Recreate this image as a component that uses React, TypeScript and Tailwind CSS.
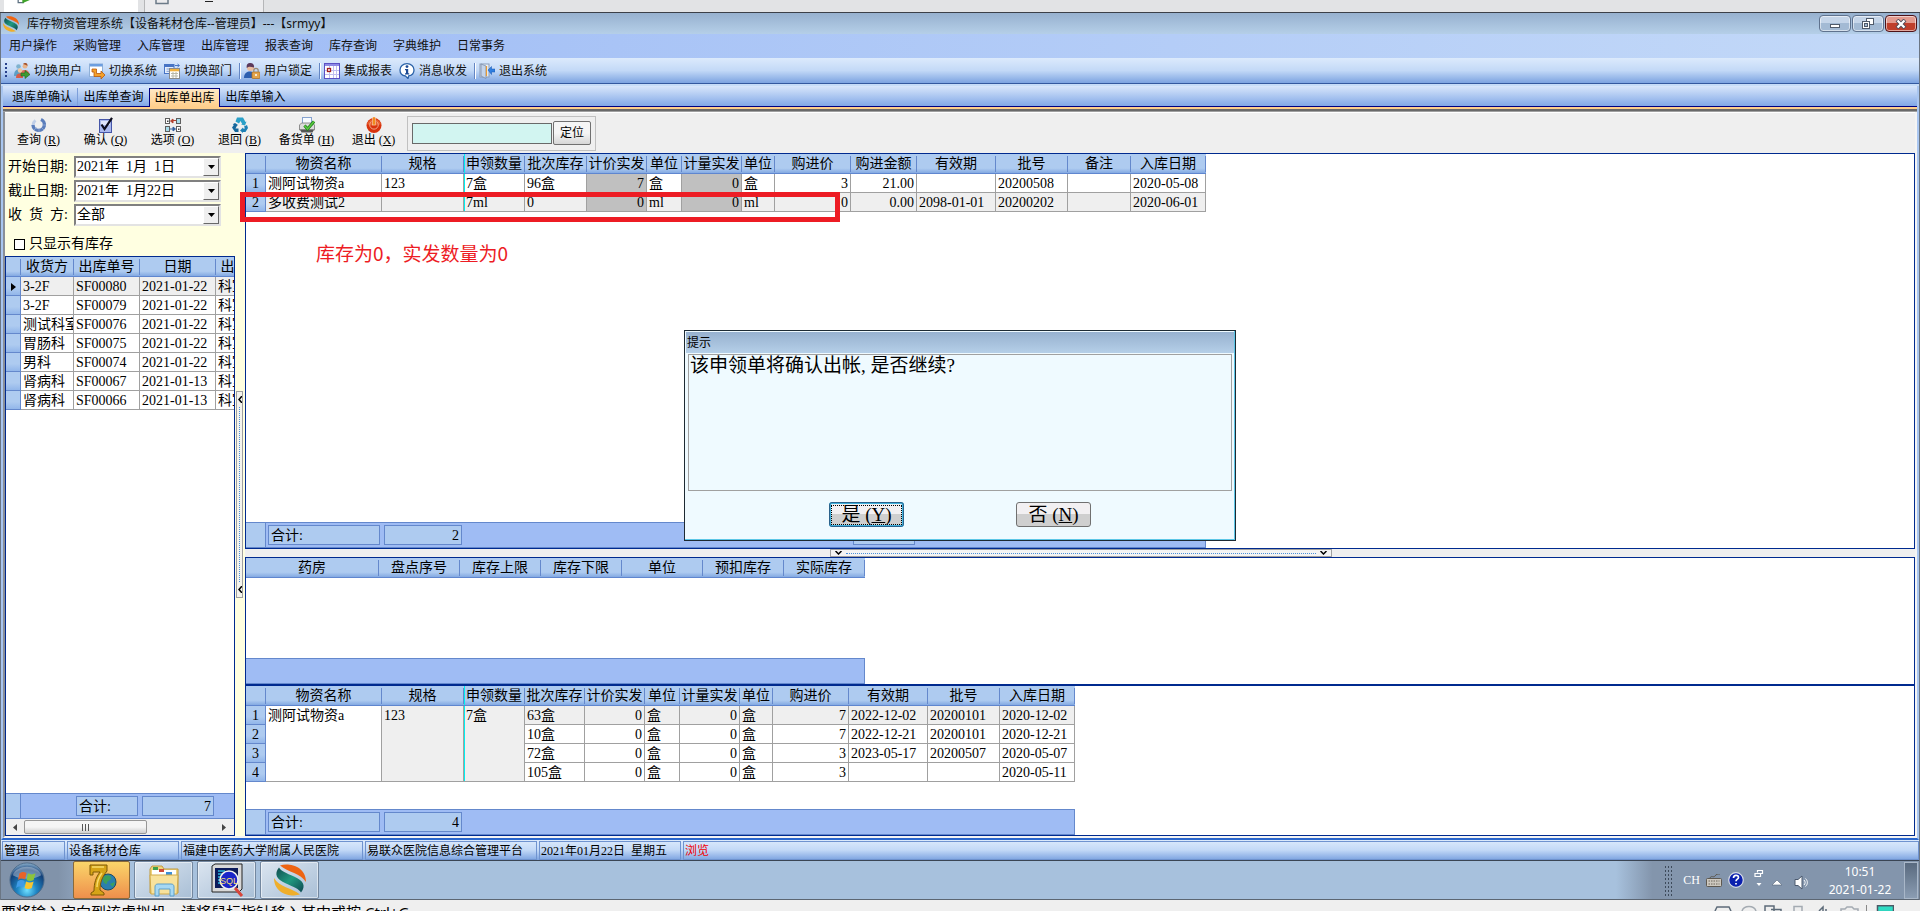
import React from "react";
import type { ReactNode } from "react";

const SONG = "font-['Liberation_Serif','Noto_Sans_CJK_SC',serif]";
const YAHEI = "font-['Noto_Sans','Noto_Sans_CJK_SC',sans-serif]";

/* ---------- icons ---------- */

function AppLogo({ className }: { className: string }) {
  return (
    <svg viewBox="0 0 32 46" preserveAspectRatio="none" className={className} aria-hidden="true">
      <defs>
        <linearGradient id="teal" x1="0" y1="0" x2="1" y2="1">
          <stop offset="0" stopColor="#0f4c50" />
          <stop offset="0.5" stopColor="#1f9a80" />
          <stop offset="1" stopColor="#0d4750" />
        </linearGradient>
      </defs>
      <path d="M6 2C16-2 32 4 32 26C27 13 14 12 6 2Z" fill="#ee6412" />
      <path d="M26 44C16 48 0 42 0 20C5 33 18 34 26 44Z" fill="#efae2b" />
      <path d="M5 5C0 14 2 22 12 28C20 33 25 36 27 41C32 32 30 24 20 18C12 13 7 10 5 5Z" fill="url(#teal)" />
    </svg>
  );
}

function SwitchUserIcon() {
  return (
    <svg viewBox="0 0 16 16" className="size-4" aria-hidden="true">
      <circle cx="4.5" cy="3.5" r="2.3" fill="#7fb2cf" />
      <path d="M0 13c0-5 2-6.5 4.500-6.500S8 8 8 11l-1 2z" fill="#5f9fc6" />
      <circle cx="11" cy="3.200" r="2.400" fill="#e8b48c" />
      <path d="M9 1c2-2 5-1 4.500 2L12 2z" fill="#a4502a" />
      <path d="M6 13c0-5 2-6 5-6s4.500 2 4.500 5z" fill="#e0705a" />
      <circle cx="6" cy="7.500" r="2.200" fill="#f0c7a0" />
      <path d="M2 15c0-3 1-4.500 4-4.500S9 12 9 15z" fill="#d85b48" />
      <path d="M7 10h4V7.500l5 4-5 4V13H7z" fill="#3f9a32" stroke="#1d6a1c" strokeWidth=".6" />
    </svg>
  );
}

function SwitchSystemIcon() {
  return (
    <svg viewBox="0 0 16 16" className="size-4" aria-hidden="true">
      <rect x=".5" y="1" width="13" height="12.500" fill="#fff" stroke="#8fb0d8" />
      <rect x="1" y="1" width="12.500" height="2.500" fill="#6c9ee0" />
      <path d="M3 6h4.500v4.500H12V8l4 4-4 4v-2.500H5V9H3z" fill="#f4a12a" stroke="#b9580c" strokeWidth=".8" />
    </svg>
  );
}

function SwitchDeptIcon() {
  return (
    <svg viewBox="0 0 16 16" className="size-4" aria-hidden="true">
      <rect x=".5" y="1.500" width="9.500" height="9" fill="#e6effc" stroke="#4774c4" />
      <rect x="1" y="2" width="9" height="2" fill="#4774c4" />
      <path d="M2.500 6h3M2.500 8.300h3" stroke="#7d9cd3" />
      <rect x="5.500" y="5.500" width="10" height="10" fill="#fff" stroke="#8a8a8a" />
      <rect x="6" y="6" width="9" height="2.300" fill="#f1b23e" />
      <path d="M7 10.500h7M7 13h7M9 9v6M12 9v6" stroke="#b8b8a8" />
      <path d="M11 2.500h4M13.500 1l2 1.500-2 1.500" fill="none" stroke="#4774c4" />
    </svg>
  );
}

function UserLockIcon() {
  return (
    <svg viewBox="0 0 16 16" className="size-4" aria-hidden="true">
      <path d="M0 15c0-5 3-6.500 6-6.500s6 2 6 6.500z" fill="#2d5fb0" />
      <circle cx="6.500" cy="4.500" r="3.600" fill="#e9bda0" />
      <path d="M2.800 5C2 1.500 4-.2 6.500 0S10.500 2 10 4.500C7 4 5 3 2.800 5z" fill="#5b3a5c" />
      <rect x="8" y="9" width="8" height="6.500" rx=".8" fill="#e2a44c" stroke="#a96a1e" strokeWidth=".7" />
      <path d="M9.800 9V7.500a2.200 2.200 0 0 1 4.400 0V9" fill="none" stroke="#9a8a72" strokeWidth="1.200" />
      <circle cx="12" cy="12" r="1" fill="#fff" />
    </svg>
  );
}

function ReportIcon() {
  return (
    <svg viewBox="0 0 16 16" className="size-4" aria-hidden="true">
      <rect x=".5" y=".5" width="15" height="15" fill="#fff" stroke="#5a50c4" />
      <rect x="1" y="1" width="14" height="2" fill="#8e8ae6" />
      <path d="M1 7.500h14M1 11.500h14M5.500 3v12M9.500 3v12M12.500 3v12" stroke="#c0bff0" />
      <rect x="3.500" y="5.500" width="3" height="3" fill="#fff" stroke="#a11d1d" strokeWidth="1.300" />
    </svg>
  );
}

function InfoIcon() {
  return (
    <svg viewBox="0 0 16 16" className="size-4" aria-hidden="true">
      <path d="M8 .7c4 0 7 2.600 7 6.200 0 3.200-2.400 5.400-5.300 6L9 15.500 6.500 13C3.300 12.500 1 10 1 6.900 1 3.300 4 .7 8 .7z" fill="#fff" stroke="#2b62a8" strokeWidth="1.300" />
      <circle cx="8" cy="3.600" r="1.400" fill="#1d4a94" />
      <path d="M6 6h3.200v4.300h1V11.500H6v-1.200h1V7.200H6z" fill="#1d4a94" />
    </svg>
  );
}

function ExitIcon() {
  return (
    <svg viewBox="0 0 16 16" className="size-4" aria-hidden="true">
      <rect x="1" y="1" width="9" height="13" fill="#e8f0fb" stroke="#8a9cb8" />
      <path d="M2 1l5 2v12.500L2 13z" fill="#c3d3ea" stroke="#7c8ea9" strokeWidth=".8" />
      <path d="M7.500 3v10" stroke="#e59b34" strokeWidth="1.200" />
      <path d="M9 7l3.500-3.500V6H16v3h-3.500v2.500z" fill="#2f7fe0" stroke="#1657b0" strokeWidth=".5" />
    </svg>
  );
}

function QueryIcon() {
  return (
    <svg viewBox="0 0 16 16" className="size-4" aria-hidden="true">
      <path d="M10 2.500a5.700 5.700 0 1 1-8 5.500" fill="none" stroke="#5a7dbb" strokeWidth="3.400" />
      <path d="M2.200 8a5.800 5.800 0 0 1 2.300-4.600" fill="none" stroke="#c0cfe8" strokeWidth="3" />
      <path d="M3 13l3-3M8 15v-4M13 13l-3-3M15 8h-4" stroke="#a9bcdf" strokeWidth=".6" />
    </svg>
  );
}

function ConfirmIcon() {
  return (
    <svg viewBox="0 0 16 16" className="size-4" aria-hidden="true">
      <rect x="1.500" y="2.500" width="12" height="13" fill="#a9b8ee" stroke="#4656a8" />
      <rect x="3" y="4" width="9" height="4" fill="#dfe5fb" />
      <path d="M3.500 7.500L6.500 12 14 .8" fill="none" stroke="#0c0c1c" strokeWidth="2.200" />
    </svg>
  );
}

function OptionsIcon() {
  return (
    <svg viewBox="0 0 18 16" className="h-4 w-[18px]" aria-hidden="true">
      <g fill="#fff" stroke="#5f5f5f">
        <rect x="1.500" y="1.500" width="4" height="5" />
        <rect x="12.500" y="1.500" width="4" height="5" fill="#a8dcea" />
        <rect x="1.500" y="9.500" width="4" height="5" fill="#a8dcea" />
        <rect x="12.500" y="9.500" width="4" height="5" />
      </g>
      <rect x="3" y="3.500" width="1.500" height="1.500" fill="#444" />
      <rect x="14" y="11.500" width="1.500" height="1.500" fill="#444" />
      <path d="M6.500 4l2.500-2v4zM9 3.500h3" fill="#b2402e" stroke="#b2402e" />
      <path d="M11.500 12l-2.500-2v4zM6 12h3" fill="#2f5f9e" stroke="#2f5f9e" />
    </svg>
  );
}

function ReturnIcon() {
  return (
    <svg viewBox="0 0 16 16" className="size-4" aria-hidden="true">
      <path d="M5 .5h6l2.500 4.500 1-.5-1.500 4-4-1 1.200-.6L8.500 4 7 6.500 3.500 4.500z" fill="#2aa0c8" />
      <path d="M3 6l3 2-1 .8L3.500 11.500H6.500V15H3L0 10.500 1.800 8 .8 7.200z" fill="#16679c" />
      <path d="M15 8l1 3-2.500 4H11v1l-3-2.500 3-3v1h2l-1-2z" fill="#1c80b6" />
    </svg>
  );
}

function StockListIcon() {
  return (
    <svg viewBox="0 0 16 16" className="size-4" aria-hidden="true">
      <rect x="3.500" y=".5" width="9" height="7" fill="#f7fbff" stroke="#86a2cf" />
      <path d="M.5 8l2-2h11l2 2v5h-15z" fill="#dcdcdc" stroke="#777" strokeWidth=".8" />
      <path d="M1 12.500h14l-1.500 3h-11z" fill="#555" />
      <path d="M5.500 8.500l3 3.500L15 4.500" fill="none" stroke="#1d7a1a" strokeWidth="3" />
      <path d="M5.500 8.500l3 3.500L15 4.500" fill="none" stroke="#58c93f" strokeWidth="1.600" />
    </svg>
  );
}

function PowerIcon() {
  return (
    <svg viewBox="0 0 16 16" className="size-4" aria-hidden="true">
      <circle cx="8" cy="8.500" r="7.500" fill="#d8330d" />
      <path d="M1 7a7.500 7.500 0 0 1 14 0c-4 2-10 2-14 0z" fill="#e8602f" />
      <path d="M5.300 4.500a4.300 4.300 0 1 0 5.400 0" fill="none" stroke="#f0a58a" strokeWidth="1" />
      <rect x="6.700" y="0" width="2.600" height="8" fill="#f08a1c" stroke="#fbe3cf" strokeWidth=".5" />
    </svg>
  );
}

function DownTriangle() {
  return (
    <svg viewBox="0 0 7 4" className="h-1 w-[7px]" aria-hidden="true">
      <path d="M0 0h7L3.500 4z" fill="#000" />
    </svg>
  );
}

function StartOrb() {
  return (
    <svg viewBox="0 0 38 38" className="size-9" aria-hidden="true">
      <defs>
        <radialGradient id="orb" cx=".5" cy=".8" r=".8">
          <stop offset="0" stopColor="#6fe0ff" />
          <stop offset=".35" stopColor="#1f86c4" />
          <stop offset=".75" stopColor="#123f78" />
          <stop offset="1" stopColor="#8fb3cf" />
        </radialGradient>
      </defs>
      <circle cx="19" cy="19" r="18" fill="url(#orb)" stroke="#4c6b8a" />
      <path d="M4 14C8 2 30 2 34 14c-8 5-22 5-30 0z" fill="#fff" opacity=".35" />
      <path d="M11 12c3-2 5-2 7.500-.5l-1.500 7c-2.500-1.500-5-1.500-7.500.5z" fill="#e8632a" />
      <path d="M20 12c3 1.500 5 1.500 8 0l-2 7c-2.500 1.500-5 1.500-7.500 0z" fill="#8cc43c" />
      <path d="M9 20.500c3-2 5-2 7.500-.5L15 27c-2.500-1.500-5-1.500-7.500.5z" fill="#3f9be8" />
      <path d="M18 20.500c3 1.500 5 1.500 8 0l-2 7c-2.500 1.500-5 1.500-7.500 0z" fill="#f7c530" />
    </svg>
  );
}

function SevenIcon() {
  return (
    <svg viewBox="0 0 32 34" className="h-[34px] w-8" aria-hidden="true">
      <circle cx="22" cy="19" r="8" fill="#2a7fae" stroke="#1c4d66" />
      <path d="M17 15c3-4 8-3 8 0s-4 2-4 5-5-1-4-5zM24 21l5-2-2 5z" fill="#3da05c" />
      <path d="M4 2h17v6c-5 6-7 12-7 19l4 3v2H5v-2l3-2c0-8 2-14 6-19H7v3H4z" fill="#d6a416" stroke="#7d5806" />
      <path d="M6 4h12M11 24c0-5 2-10 5-14" fill="none" stroke="#f8dc6c" strokeWidth="1.500" />
    </svg>
  );
}

function FolderIcon() {
  return (
    <svg viewBox="0 0 34 34" className="size-[34px]" aria-hidden="true">
      <path d="M3 6l2-3h10l2 3h14v24H3z" fill="#f0d47c" stroke="#c09a3e" />
      <path d="M5 7h24v6H5z" fill="#fff" />
      <path d="M6 4h5v3H6z" fill="#3fa04a" />
      <path d="M12 6h5v3h-5z" fill="#d04a3a" />
      <path d="M19 9h6v3h-6z" fill="#3c8fd8" />
      <path d="M3 12h28l-1 19H4z" fill="#f8e29c" stroke="#d1ab4c" />
      <path d="M8 33V24c0-2 1-3 3-3h13c2 0 3 1 3 3v9h-4v-7H12v7z" fill="#a6d8f3" stroke="#5c9fca" />
    </svg>
  );
}

function SqlIcon() {
  return (
    <svg viewBox="0 0 34 34" className="size-[34px]" aria-hidden="true">
      <path d="M2 3l3-2h27v25l-3 3H2z" fill="#d8d8d8" stroke="#222" />
      <rect x="5" y="5" width="23" height="20" fill="#0b1a5a" />
      <path d="M8 8h7M8 11h5M8 14h4M8 17h4M8 20h5" stroke="#28b7e0" strokeWidth="1.500" />
      <path d="M25 25l7 8" stroke="#d8453a" strokeWidth="3" />
      <circle cx="19" cy="17" r="9" fill="#1a24c8" stroke="#f0f0f0" strokeWidth="1.500" />
      <text x="19" y="20.500" textAnchor="middle" fontSize="9" fontFamily="Liberation Sans, sans-serif" fill="#f6e070">SQL</text>
    </svg>
  );
}

function DotGrip() {
  return (
    <span className="h-[31px] w-[9px] bg-[radial-gradient(circle,#3d4a5a_0.8px,transparent_1px)] bg-[length:3px_4px]" />
  );
}

/* ---------- data ---------- */

const menus = ["用户操作", "采购管理", "入库管理", "出库管理", "报表查询", "库存查询", "字典维护", "日常事务"];

const tools: { icon: ReactNode; label: string; sep?: boolean }[] = [
  { icon: <SwitchUserIcon />, label: "切换用户" },
  { icon: <SwitchSystemIcon />, label: "切换系统" },
  { icon: <SwitchDeptIcon />, label: "切换部门", sep: true },
  { icon: <UserLockIcon />, label: "用户锁定", sep: true },
  { icon: <ReportIcon />, label: "集成报表" },
  { icon: <InfoIcon />, label: "消息收发", sep: true },
  { icon: <ExitIcon />, label: "退出系统" },
];

const tabs = ["退库单确认", "出库单查询", "出库单出库", "出库单输入"];

const actions: { icon: ReactNode; label: string; key: string }[] = [
  { icon: <QueryIcon />, label: "查询", key: "R" },
  { icon: <ConfirmIcon />, label: "确认", key: "Q" },
  { icon: <OptionsIcon />, label: "选项", key: "O" },
  { icon: <ReturnIcon />, label: "退回", key: "B" },
  { icon: <StockListIcon />, label: "备货单", key: "H" },
  { icon: <PowerIcon />, label: "退出", key: "X" },
];

const orders = [
  ["3-2F", "SF00080", "2021-01-22"],
  ["3-2F", "SF00079", "2021-01-22"],
  ["测试科室", "SF00076", "2021-01-22"],
  ["胃肠科", "SF00075", "2021-01-22"],
  ["男科", "SF00074", "2021-01-22"],
  ["肾病科", "SF00067", "2021-01-13"],
  ["肾病科", "SF00066", "2021-01-13"],
];

const itemHeads = ["", "物资名称", "规格", "申领数量", "批次库存", "计价实发", "单位", "计量实发", "单位", "购进价", "购进金额", "有效期", "批号", "备注", "入库日期"];
const items = [
  ["1", "测阿试物资a", "123", "7盒", "96盒", "7", "盒", "0", "盒", "3", "21.00", "", "20200508", "", "2020-05-08"],
  ["2", "多收费测试2", "", "7ml", "0", "0", "ml", "0", "ml", "0", "0.00", "2098-01-01", "20200202", "", "2020-06-01"],
];

const batchHeads = ["", "物资名称", "规格", "申领数量", "批次库存", "计价实发", "单位", "计量实发", "单位", "购进价", "有效期", "批号", "入库日期"];
const batches = [
  ["63盒", "0", "盒", "0", "盒", "7", "2022-12-02", "20200101", "2020-12-02"],
  ["10盒", "0", "盒", "0", "盒", "7", "2022-12-21", "20200101", "2020-12-21"],
  ["72盒", "0", "盒", "0", "盒", "3", "2023-05-17", "20200507", "2020-05-07"],
  ["105盒", "0", "盒", "0", "盒", "3", "", "", "2020-05-11"],
];

const statuses: { text: string; width: string }[] = [
  { text: "管理员", width: "w-[63px]" },
  { text: "设备耗材仓库", width: "w-[112px]" },
  { text: "福建中医药大学附属人民医院", width: "w-[182px]" },
  { text: "易联众医院信息综合管理平台", width: "w-[172px]" },
  { text: "2021年01月22日\u00a0\u00a0星期五", width: "w-[142px]" },
];

/* ---------- grid parts ---------- */

function Cols({ widths }: { widths: number[] }) {
  return (
    <colgroup>
      {widths.map((w, i) => (
        <col key={i} style={{ width: w }} />
      ))}
    </colgroup>
  );
}

const HEAD_BG = "bg-linear-to-b from-[#aecbf0] from-75% to-[#83a9e2]";
const CYAN_EDGE = "shadow-[inset_1px_0_0_#00f0f0]";

function Heads({ labels, cyanAt }: { labels: string[]; cyanAt?: number }) {
  return (
    <thead>
      <tr>
        {labels.map((label, i) => (
          <th
            key={i}
            className={`h-5 overflow-hidden border-b border-[#5f86cf] px-0 pt-0.5 pb-px font-normal ${HEAD_BG} ${i === cyanAt ? CYAN_EDGE : ""}`}
          >
            <div className="h-4 overflow-hidden border-r border-[#6488cc] leading-4 whitespace-nowrap">{label}</div>
          </th>
        ))}
      </tr>
    </thead>
  );
}

const CELL = "h-[19px] overflow-hidden border-r border-b border-[#a0a0a0] px-0.5 pt-0.5 pb-0 leading-4 whitespace-nowrap";
const INDICATOR =
  "h-[19px] overflow-hidden border-r border-b border-[#6488cc] bg-linear-to-b from-[#aecbf0] from-60% to-[#92b6ea] px-0 pt-0.5 pb-0 text-center leading-4 font-normal";

const widthsA = [20, 116, 82, 61, 62, 60, 35, 60, 33, 76, 66, 79, 72, 63, 75];
const widthsB = [133, 81, 81, 81, 81, 81, 81];
const widthsC = [20, 116, 82, 61, 60, 60, 35, 60, 33, 76, 79, 72, 75];
const widthsL = [15, 53, 66, 76, 66];

function SumBox({ children, className }: { children?: ReactNode; className: string }) {
  return <span className={`border border-[#6488cc] bg-[#aecbf0] px-0.5 leading-5 ${className}`}>{children}</span>;
}

function GridFooter({ count, width, extra }: { count: string; width: string; extra?: boolean }) {
  return (
    <div className={`flex h-[26px] shrink-0 border border-l-0 border-[#6488cc] bg-[#9fbcf4] ${width}`}>
      <span className="w-5 border-r border-[#6488cc] bg-[#aecbf0]" />
      <div className="flex flex-1 gap-1 px-0.5 py-0.5">
        <SumBox className="w-[112px]">合计:</SumBox>
        <SumBox className="w-[78px] text-right">{count}</SumBox>
        {extra && <SumBox className="ml-[387px] w-[62px]" />}
      </div>
    </div>
  );
}

/* ---------- page parts ---------- */

function HostTop() {
  return (
    <div className="flex h-[13px] shrink-0 overflow-hidden border-b border-[#3c4048] bg-[#e2e3e5]">
      <div className="ml-1 flex w-[134px] bg-white pl-3">
        <svg viewBox="0 0 16 6" className="h-[5px] w-4" aria-hidden="true">
          <path d="M1 0v3h7" fill="none" stroke="#5c6f80" strokeWidth="1.500" />
          <path d="M6 0v4l9-4z" fill="#3fa32a" />
        </svg>
      </div>
      <div className="ml-1.5 flex w-[120px] gap-9 border-x border-[#b5b6b8] bg-[#ececee] pl-2.5">
        <svg viewBox="0 0 14 5" className="h-[5px] w-3.5" aria-hidden="true">
          <path d="M1 0v3.500h12V0" fill="none" stroke="#6b7a88" strokeWidth="1.500" />
        </svg>
        <span className="h-[2px] w-2 border-b border-[#222]" />
      </div>
    </div>
  );
}

function TitleBar() {
  const frame = "flex h-[17px] w-8 items-center justify-center rounded-sm border shadow-[inset_0_0_0_1px_rgba(255,255,255,0.55)]";
  return (
    <header className={`flex h-[21px] shrink-0 items-center bg-linear-to-b from-[#97b1cf] to-[#b5cfe8] pr-0.5 pl-0.5 text-xs ${YAHEI}`}>
      <AppLogo className="h-4 w-4" />
      <h1 className="ml-2 flex-1 leading-5 text-[#111]">库存物资管理系统【设备耗材仓库--管理员】---【srmyy】</h1>
      <div className="flex gap-px">
        <button type="button" aria-label="最小化" className={`${frame} border-[#5f728e] bg-linear-to-b from-[#c5d5e9] from-50% to-[#a3bad4] to-50%`}>
          <svg viewBox="0 0 10 4" className="mt-1 h-1 w-2.5"><rect x=".5" y=".5" width="9" height="3" fill="#fff" stroke="#4f5a6a" /></svg>
        </button>
        <button type="button" aria-label="还原" className={`${frame} border-[#5f728e] bg-linear-to-b from-[#c5d5e9] from-50% to-[#a3bad4] to-50%`}>
          <svg viewBox="0 0 12 11" className="h-[11px] w-3">
            <rect x="4.500" y=".5" width="7" height="6" fill="#fff" stroke="#4f5a6a" />
            <rect x=".5" y="3.500" width="7" height="7" fill="#fff" stroke="#4f5a6a" />
            <rect x="2.500" y="5.500" width="3" height="3" fill="#a3bad4" stroke="#4f5a6a" />
          </svg>
        </button>
        <button type="button" aria-label="关闭" className={`${frame} border-[#4e1218] bg-linear-to-b from-[#e39a8e] from-50% to-[#bf3f2c] to-50%`}>
          <svg viewBox="0 0 12 10" className="h-2.5 w-3">
            <path d="M2 1l8 8M10 1L2 9" stroke="#4b4a58" strokeWidth="4" />
            <path d="M2.500 1.500l7 7M9.500 1.500l-7 7" stroke="#fff" strokeWidth="2.300" />
          </svg>
        </button>
      </div>
    </header>
  );
}

function MenuBar() {
  return (
    <nav className={`flex h-6 shrink-0 items-center bg-linear-to-r from-[#9dbaf5] to-[#c3d9f8] text-xs ${YAHEI}`}>
      {menus.map((m) => (
        <button type="button" key={m} className="px-2 leading-5 text-[#111]">
          {m}
        </button>
      ))}
    </nav>
  );
}

function ToolBar() {
  return (
    <div className="shrink-0 bg-[#c6dcf7] pb-0.5">
      <div className={`flex h-[26px] items-center gap-[7px] border-b border-[#33599f] bg-linear-to-b from-[#dceafc] via-[#c3d9f7] to-[#7ca3e0] pl-1 text-xs ${YAHEI}`}>
        <span className="h-4 w-0.5 bg-[repeating-linear-gradient(to_bottom,#28408c_0px_2px,transparent_2px_4px)]" />
        {tools.map((t) => (
          <React.Fragment key={t.label}>
            <button type="button" className="flex items-center gap-1 leading-5 text-[#111]">
              {t.icon}
              {t.label}
            </button>
            {t.sep && <span className="-mr-1 h-4 w-0.5 border-l border-[#6486c4] bg-white" />}
          </React.Fragment>
        ))}
      </div>
    </div>
  );
}

function TabStrip() {
  return (
    <div className="shrink-0">
      <div role="tablist" className={`flex h-[21px] items-end border-b border-[#000080] bg-linear-to-b from-[#d9e7fb] to-[#82a8e6] pl-1 text-xs ${SONG}`}>
        {tabs.map((t, i) => (
          <button
            type="button"
            role="tab"
            aria-selected={i === 2}
            key={t}
            className={
              i === 2
                ? "-mb-px h-[19px] w-[71px] border border-b-0 border-[#000080] bg-linear-to-b from-[#ffe8c4] to-[#ffcf8c] leading-[18px]"
                : i === 0
                  ? "h-[18px] w-[71px] border-r border-[#7d9fda] leading-[18px]"
                  : "h-[18px] w-[71px] leading-[18px]"
            }
          >
            {t}
          </button>
        ))}
      </div>
      <div className="h-0.5 bg-[#ffcf8c]" />
      <div className="h-[3px] border-b border-[#a0a0a0] bg-[#696969]" />
    </div>
  );
}

function ActionBar() {
  return (
    <div className={`flex h-[41px] shrink-0 items-center border-t border-white bg-[#efefef] text-xs ${SONG}`}>
      {actions.map((a) => (
        <button type="button" key={a.label} className="flex h-[33px] w-[67px] flex-col items-center whitespace-nowrap">
          {a.icon}
          <span className="leading-[14px]">
            {a.label} (<u>{a.key}</u>)
          </span>
        </button>
      ))}
      <div className="flex h-[35px] items-center gap-px border border-[#c0c0c0] px-1">
        <input aria-label="定位内容" className="h-[21px] w-[140px] border border-[#696969] bg-[#d2f5f1] px-1 outline-none" />
        <button type="button" className="h-6 w-[38px] rounded-xs border border-[#707070] bg-linear-to-b from-[#f5f5f5] from-50% to-[#d6d6d6]">
          定位
        </button>
      </div>
    </div>
  );
}

function Combo({ id, label, value }: { id: string; label: string; value: string }) {
  return (
    <div className="flex h-[22px] items-center">
      <label htmlFor={id} className="w-[66px] whitespace-pre">
        {label}
      </label>
      <div className="relative h-[22px] w-[147px] border-2 border-t-[#808080] border-r-[#e3e3e3] border-b-[#e3e3e3] border-l-[#808080] bg-white">
        <select id={id} defaultValue={value} className="size-full appearance-none bg-transparent pl-px leading-4 outline-none">
          <option>{value}</option>
        </select>
        <span className="pointer-events-none absolute inset-y-0 right-0 flex w-4 items-center justify-center border border-t-white border-r-[#696969] border-b-[#696969] border-l-white bg-[#efefef]">
          <DownTriangle />
        </span>
      </div>
    </div>
  );
}

function OrderPanel() {
  return (
    <aside className="flex w-60 shrink-0 bg-[#ffffe1]">
      <div className="flex min-w-0 flex-1 flex-col">
        <div className="flex flex-col gap-0.5 pt-[3px] pl-[3px]">
          <Combo id="from" label="开始日期:" value={"2021年\u00a0\u00a01月\u00a0\u00a01日"} />
          <Combo id="to" label="截止日期:" value={"2021年\u00a0\u00a01月22日"} />
          <Combo id="dept" label={"收\u2002货\u2002方:"} value="全部" />
        </div>
        <label className="flex h-[30px] items-center gap-1 pt-1.5 pl-[9px]">
          <input type="checkbox" className="size-[11px] appearance-none border border-black bg-white" />
          只显示有库存
        </label>
        <div className="flex min-h-0 flex-1 flex-col overflow-hidden border border-[#002a8f] bg-white">
          <div className="min-h-0 flex-1 overflow-hidden">
            <table className="w-[276px] table-fixed border-separate border-spacing-0">
              <Cols widths={widthsL} />
              <Heads labels={["", "收货方", "出库单号", "日期", "出库类型"]} />
              <tbody>
                {orders.map((o, i) => (
                  <tr key={o[1]} className={i === 0 ? "bg-[#efefef]" : "bg-white"}>
                    <th className={INDICATOR}>
                      {i === 0 && (
                        <svg viewBox="0 0 5 8" className="mx-auto h-2 w-[5px]" aria-hidden="true">
                          <path d="M0 0v8l5-4z" />
                        </svg>
                      )}
                    </th>
                    {o.map((c, j) => (
                      <td key={j} className={CELL}>{c}</td>
                    ))}
                    <td className={CELL}>科室</td>
                  </tr>
                ))}
              </tbody>
            </table>
          </div>
          <div className="flex h-[26px] shrink-0 border-y border-[#6488cc] bg-[#9fbcf4]">
            <span className="w-[15px] border-r border-[#6488cc] bg-[#aecbf0]" />
            <div className="flex gap-1 py-0.5 pl-[55px]">
              <SumBox className="w-[62px]">合计:</SumBox>
              <SumBox className="w-[72px] text-right">7</SumBox>
            </div>
          </div>
          <div className="flex h-4 shrink-0 items-center bg-[#efefef]">
            <span className="flex w-[18px] justify-center">
              <svg viewBox="0 0 4 7" className="h-[7px] w-1" aria-hidden="true"><path d="M4 0v7L0 3.500z" fill="#444" /></svg>
            </span>
            <span className="flex h-3.5 w-[123px] items-center justify-center gap-0.5 rounded-xs border border-[#979797] bg-linear-to-b from-[#f5f5f5] from-50% to-[#cfcfcf]">
              <i className="h-[7px] w-px bg-[#555]" />
              <i className="h-[7px] w-px bg-[#555]" />
              <i className="h-[7px] w-px bg-[#555]" />
            </span>
            <span className="flex flex-1 justify-end pr-2">
              <svg viewBox="0 0 4 7" className="h-[7px] w-1" aria-hidden="true"><path d="M0 0v7l4-3.500z" fill="#444" /></svg>
            </span>
          </div>
        </div>
      </div>
      <div className="flex w-2.5 flex-col items-start pt-[238px] pl-px">
        <div className="flex h-[207px] w-[7px] flex-col items-center justify-between border border-[#a0a0a0] bg-[#f4f4ee] py-1">
          <svg viewBox="0 0 4 7" className="h-[7px] w-1" aria-hidden="true"><path d="M4 0L1 3.500 4 7" fill="none" stroke="#000" strokeWidth="1.500" /></svg>
          <span className="my-1 flex-1 border-l border-dotted border-[#4a90d9]" />
          <svg viewBox="0 0 4 7" className="h-[7px] w-1" aria-hidden="true"><path d="M4 0L1 3.500 4 7" fill="none" stroke="#000" strokeWidth="1.500" /></svg>
        </div>
      </div>
    </aside>
  );
}

const RIGHT_A = [5, 7, 9, 10];

function ItemGrid() {
  return (
    <section className="flex min-h-0 flex-1 flex-col justify-between overflow-hidden border border-[#002a8f] bg-white">
      <table className="w-[960px] table-fixed border-separate border-spacing-0">
        <Cols widths={widthsA} />
        <Heads labels={itemHeads} cyanAt={3} />
        <tbody>
          {items.map((row, r) => (
            <tr key={r} className={r === 1 ? "bg-[#efefef]" : "bg-white"}>
              {row.map((c, i) =>
                i === 0 ? (
                  <th key={i} className={INDICATOR}>{c}</th>
                ) : (
                  <td
                    key={i}
                    className={`${CELL} ${RIGHT_A.includes(i) ? "text-right" : ""} ${i === 5 || i === 7 ? "bg-[#c0c0c0]" : ""} ${
                      i === 3 ? CYAN_EDGE : ""
                    }`}
                  >
                    {c}
                  </td>
                ),
              )}
            </tr>
          ))}
        </tbody>
      </table>
      <GridFooter count="2" width="w-[960px]" extra />
    </section>
  );
}

function Splitter() {
  return (
    <div className="flex h-2 shrink-0 pl-[585px]">
      <div className="flex h-2 w-[502px] items-center justify-between border border-[#a0a0a0] bg-[#f4f4f4] px-1">
        <svg viewBox="0 0 7 4" className="h-1 w-[7px]" aria-hidden="true"><path d="M.5 0l3 3 3-3" fill="none" stroke="#000" strokeWidth="1.500" /></svg>
        <span className="mx-1 flex-1 border-t border-dotted border-[#4a90d9]" />
        <svg viewBox="0 0 7 4" className="h-1 w-[7px]" aria-hidden="true"><path d="M.5 0l3 3 3-3" fill="none" stroke="#000" strokeWidth="1.500" /></svg>
      </div>
    </div>
  );
}

function StoreGrid() {
  return (
    <section className="flex h-32 shrink-0 flex-col justify-between border border-[#002a8f] bg-white">
      <table className="w-[619px] table-fixed border-separate border-spacing-0">
        <Cols widths={widthsB} />
        <Heads labels={["药房", "盘点序号", "库存上限", "库存下限", "单位", "预扣库存", "实际库存"]} />
      </table>
      <div className="h-[26px] w-[619px] border border-l-0 border-[#6488cc] bg-[#9fbcf4]" />
    </section>
  );
}

function BatchGrid() {
  return (
    <section className="flex h-[151px] shrink-0 flex-col justify-between border border-[#002a8f] bg-white">
      <table className="w-[829px] table-fixed border-separate border-spacing-0">
        <Cols widths={widthsC} />
        <Heads labels={batchHeads} cyanAt={3} />
        <tbody>
          {batches.map((row, r) => (
            <tr key={r} className={r === 0 ? "bg-[#efefef]" : "bg-white"}>
              <th className={INDICATOR}>{r + 1}</th>
              {r === 0 && (
                <>
                  <td rowSpan={4} className={`${CELL} bg-white align-top`}>测阿试物资a</td>
                  <td rowSpan={4} className={`${CELL} bg-[#efefef] align-top`}>123</td>
                  <td rowSpan={4} className={`${CELL} ${CYAN_EDGE} bg-[#efefef] align-top`}>7盒</td>
                </>
              )}
              {row.map((c, i) => (
                <td key={i} className={`${CELL} ${i === 1 || i === 3 || i === 5 ? "text-right" : ""}`}>{c}</td>
              ))}
            </tr>
          ))}
        </tbody>
      </table>
      <GridFooter count="4" width="w-[829px]" />
    </section>
  );
}

function StatusBar() {
  const cell = "h-[19px] border border-[#6f93cf] pl-px leading-[18px] whitespace-nowrap";
  return (
    <footer className={`flex h-[21px] shrink-0 items-center gap-0.5 border-b border-[#3a4554] bg-linear-to-b from-[#dceafc] via-[#c3d9f7] to-[#7ca3e0] pl-px text-xs ${SONG}`}>
      {statuses.map((s) => (
        <span key={s.text} className={`${cell} ${s.width}`}>{s.text}</span>
      ))}
      <span className={`${cell} flex-1 text-[#f00000]`}>浏览</span>
    </footer>
  );
}

function TaskBar() {
  const btn = "flex h-[38px] items-center justify-center rounded-xs border";
  const plain = "border-[#73879f] bg-linear-to-br from-[#dbe5f0] to-[#a9bfd6] shadow-[inset_0_0_0_1px_rgba(255,255,255,0.5)]";
  return (
    <div className="flex h-[39px] shrink-0 items-center border-b border-[#5c6672] bg-linear-to-r from-[#8193aa] from-3% via-[#a7c1dd] via-6% to-[#a7c1dd]">
      <button type="button" aria-label="开始" className="ml-2"><StartOrb /></button>
      <span className="mr-4 ml-3"><DotGrip /></span>
      <div className="flex gap-1">
        <button type="button" aria-label="易联众" className={`${btn} w-[57px] border-[#8a6a3a] bg-linear-to-b from-[#f9d56a] to-[#ee8f4c]`}><SevenIcon /></button>
        <button type="button" aria-label="资源管理器" className={`${btn} w-[59px] ${plain}`}><FolderIcon /></button>
        <button type="button" aria-label="SQL" className={`${btn} w-[59px] ${plain}`}><SqlIcon /></button>
        <button type="button" aria-label="库存物资管理系统" className={`${btn} w-[59px] ${plain}`}><AppLogo className="h-8 w-8" /></button>
      </div>
      <div className="ml-auto flex h-full items-center bg-linear-to-r from-transparent to-[#8395ac] to-12% pl-12 text-white">
        <DotGrip />
        <span className={`ml-2.5 text-xs leading-4 ${SONG}`}>CH</span>
        <svg viewBox="0 0 16 13" className="ml-1.5 h-[13px] w-4" aria-hidden="true">
          <path d="M4 4c1-3 4 0 5-2s3-2 5-2" fill="none" stroke="#5d5850" />
          <rect x=".5" y="4.500" width="15" height="8" rx="1" fill="#cdc8bf" stroke="#5d5850" />
          <path d="M2.500 7h11M2.500 10h11" stroke="#6d675d" strokeDasharray="1.500 1" />
        </svg>
        <svg viewBox="0 0 16 16" className="ml-1.5 size-4" aria-hidden="true">
          <circle cx="8" cy="8" r="7.300" fill="#0a1fae" stroke="#d6dbe6" strokeWidth="1.200" />
          <path d="M5.500 6c0-3.500 5-3.500 5-.6 0 1.800-2.500 1.800-2.500 3.800M8 11v1.500" fill="none" stroke="#fff" strokeWidth="1.700" />
        </svg>
        <svg viewBox="0 0 10 18" className="-mt-1 ml-2.5 h-[18px] w-2.5" aria-hidden="true">
          <path d="M3.500 3.500v-2h5v3h-2M1 4.500h5.500v3H1z" fill="none" stroke="#fff" strokeWidth="1.200" />
          <path d="M2.500 14h5L5 17z" fill="#fff" />
        </svg>
        <svg viewBox="0 0 10 6" className="mt-1.5 ml-2 h-1.5 w-2.5" aria-hidden="true"><path d="M0 5l5-5 5 5z" fill="#fff" stroke="#56647a" strokeWidth=".6" /></svg>
        <svg viewBox="0 0 14 15" className="mt-1 ml-3 h-[15px] w-3.5" aria-hidden="true">
          <path d="M1 4.500h3L8 1v13l-4-3.500H1z" fill="#fff" stroke="#4c5a6e" />
          <path d="M10 5c1.500 1.500 1.500 3.500 0 5M11.500 3.500c2.500 2.500 2.500 5.500 0 8" fill="none" stroke="#fff" />
        </svg>
        <div className={`ml-3 w-20 pt-0.5 text-center text-xs leading-[18px] ${YAHEI}`}>
          <div>10:51</div>
          <div>2021-01-22</div>
        </div>
        <span className="mr-px ml-1 h-[37px] w-3.5 border border-[#a9b7c8] bg-linear-to-b from-[#596a7f] to-[#8b9db3]" />
      </div>
    </div>
  );
}

function HostBottom() {
  return (
    <div className={`flex h-[11px] shrink-0 items-start justify-between overflow-hidden bg-[#efefef] pt-[5px] pl-px text-[15px] leading-[15px] ${YAHEI}`}>
      <span className="whitespace-nowrap">要将输入定向到该虚拟机，请将鼠标指针移入其中或按 Ctrl+G。</span>
      <svg viewBox="0 0 180 6" className="mr-[26px] h-1.5 w-[180px]" aria-hidden="true">
        <g fill="none" stroke="#5d6b79" strokeWidth="1.500">
          <path d="M1 6l2-4h12l2 4" />
          <path d="M28 6c2-6 12-6 14 0" stroke="#a4abb2" />
          <path d="M51 6V1h9v5M57 4.500h10V6" />
          <path d="M80 6V1.500h8V6" stroke="#a4abb2" />
          <path d="M105 6l4-4v4M112 4v2" />
          <path d="M127 6V4h4l2-2h5l2 2h4v2" stroke="#a4abb2" />
        </g>
        <path d="M152.500 0v6" stroke="#888" />
        <rect x="163.500" y=".7" width="16" height="6" fill="#2fdcc4" stroke="#4d5966" strokeWidth="1.500" />
      </svg>
    </div>
  );
}

function ConfirmDialog() {
  const btn = "h-[25px] w-[75px] rounded-[3px] bg-linear-to-b from-[#f2f0f2] from-50% to-[#cfcfcf] to-50% text-[19px] leading-5";
  return (
    <div role="dialog" aria-labelledby="dlg" className={`absolute top-[330px] left-[684px] flex h-[211px] w-[552px] flex-col border border-[#1d2a33] bg-[#effaff] p-px shadow-[inset_-1px_-1px_0_#5cc6e6] ${SONG}`}>
      <h2 id="dlg" className="h-[21px] bg-linear-to-b from-[#97b1cf] to-[#b5cfe8] pl-px text-xs leading-[22px]">提示</h2>
      <p className="mx-0.5 mt-px h-[137px] border border-[#a0a0a0] px-px text-[19px] leading-[22px]">该申领单将确认出帐, 是否继续?</p>
      <div className="flex justify-center gap-28 pt-[11px]">
        <button type="button" className={`${btn} border-2 border-[#3fb2de] outline-1 -outline-offset-1 outline-[#2c628b] outline-solid`}>
          <span className="block border border-dotted border-black leading-[18px]">是 (<u>Y</u>)</span>
        </button>
        <button type="button" className={`${btn} border border-[#707070]`}>否 (<u>N</u>)</button>
      </div>
    </div>
  );
}

export default function App() {
  return (
    <div className="relative flex h-screen flex-col overflow-hidden bg-[#efefef] text-black">
      <HostTop />
      <div className="flex min-h-0 flex-1 flex-col border-x border-[#6b7684]">
        <TitleBar />
        <MenuBar />
        <ToolBar />
        <div className="flex min-h-0 flex-1 flex-col border-r-2 border-b-2 border-l-2 border-[#a9c6f0] border-b-[#2a66cc]">
          <TabStrip />
          <div className={`flex min-h-0 flex-1 flex-col border-x-2 border-b-2 border-r-[#f4f4f4] border-b-[#f4f4f4] border-l-[#8a8f98] text-sm leading-4 ${SONG}`}>
            <ActionBar />
            <div className="flex min-h-0 flex-1">
              <OrderPanel />
              <main className="flex min-w-0 flex-1 flex-col">
                <ItemGrid />
                <Splitter />
                <StoreGrid />
                <BatchGrid />
              </main>
            </div>
          </div>
        </div>
        <StatusBar />
        <TaskBar />
      </div>
      <HostBottom />

      <div className="pointer-events-none absolute top-[192px] left-[240px] h-[30px] w-[600px] border-[5px] border-[#ed1c24]" />
      <p className="pointer-events-none absolute top-[241px] left-[316px] font-['Noto_Sans_CJK_SC',sans-serif] text-[19px] leading-6 whitespace-nowrap text-[#ed1c24]">
        库存为0，实发数量为0
      </p>
      <ConfirmDialog />
    </div>
  );
}
